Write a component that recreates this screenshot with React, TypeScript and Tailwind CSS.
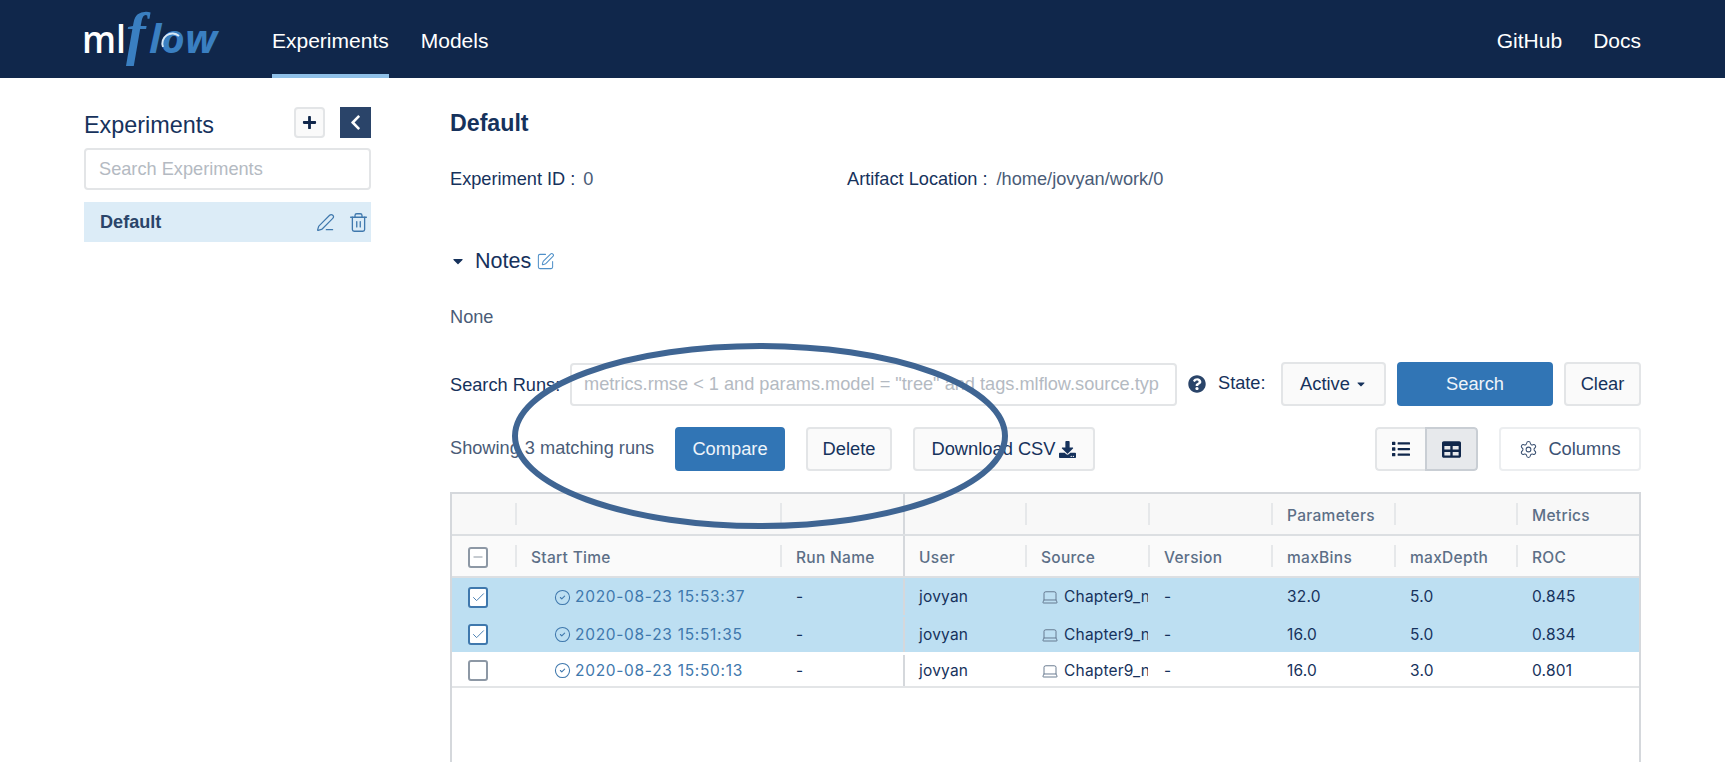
import React from "react";
import { CircleCheck, Laptop, PenLine, Settings, SquarePen, Trash2, Check, Minus } from "lucide-react";
import { FaChevronLeft, FaDownload, FaList, FaPlus, FaQuestionCircle, FaTable, FaCaretDown } from "react-icons/fa";

const COLS = "grid grid-cols-[63px_265px_123px_122px_123px_123px_123px_122px_123px]";

function Logo() {
  return (
    <svg width="150" height="62" viewBox="0 0 150 62" className="ml-[80px] mt-[10px] shrink-0">
      <text x="2" y="43" fontFamily="'Open Sans', sans-serif" fontSize="37" fontWeight="600" fill="#ffffff" textLength="44" lengthAdjust="spacingAndGlyphs">ml</text>
      <text x="46" y="43" fontFamily="'Liberation Serif', serif" fontStyle="italic" fontSize="59" fontWeight="700" fill="#3a7fc1">f</text>
      <text x="69" y="43" fontFamily="'Open Sans', sans-serif" fontStyle="italic" fontSize="40" fontWeight="700" fill="#3a7fc1" textLength="68" lengthAdjust="spacingAndGlyphs">low</text>
      <path d="M83 37 A10 10 0 0 1 99 26" fill="none" stroke="#d8e8f5" strokeWidth="2" />
    </svg>
  );
}

function Btn({ className = "", primary = false, children }: { className?: string; primary?: boolean; children: React.ReactNode }) {
  return (
    <div
      className={`flex h-[44px] items-center justify-center rounded-[4px] border-2 text-[18.3px] ${
        primary ? "border-[#3175b5] bg-[#3175b5] text-[#eef4fa]" : "border-[#e3e5e7] bg-[#fafafa] text-[#16325c]"
      } ${className}`}
    >
      {children}
    </div>
  );
}

function Box({ state }: { state: "checked" | "empty" | "some" }) {
  return (
    <div className={`flex h-full items-center pl-[16px] ${state === "some" ? "pt-[2px]" : ""}`}>
      <span
        className={`flex h-[21px] w-[20px] items-center justify-center rounded-[3px] border-2 bg-white ${
          state === "checked" ? "border-[#3f78ad]" : "border-[#8d98a5]"
        }`}
      >
        {state === "checked" && <Check size={15} strokeWidth={1.5} className="text-[#3f78ad]" />}
        {state === "some" && <Minus size={14} strokeWidth={1.5} className="text-[#7c8794]" />}
      </span>
    </div>
  );
}

const runs = [
  { t: "2020-08-23 15:53:37", bins: "32.0", depth: "5.0", roc: "0.845", sel: true, h: "h-[37px] pt-[1px]" },
  { t: "2020-08-23 15:51:35", bins: "16.0", depth: "5.0", roc: "0.834", sel: true, h: "h-[37px] pt-[2px]" },
  { t: "2020-08-23 15:50:13", bins: "16.0", depth: "3.0", roc: "0.801", sel: false, h: "h-[36px] pt-[3px]" },
];

function Separator() {
  return <span className="absolute left-0 top-1/2 h-[22px] w-[2px] -translate-y-1/2 bg-[#e6e8ea]" />;
}

function H({ children, first = false, divider = false }: { children?: React.ReactNode; first?: boolean; divider?: boolean }) {
  return (
    <div
      className={`relative flex h-full items-center pt-[3px] text-[15.5px] font-medium tracking-[0.3px] text-[#5c6f87] ${
        divider ? "border-l-2 border-l-[#d5d8dc] pl-[14px]" : "pl-[16px]"
      }`}
    >
      {!first && !divider && <Separator />}
      {children}
    </div>
  );
}

function C({ children, divider = false }: { children?: React.ReactNode; divider?: boolean }) {
  return (
    <div
      className={`flex h-full items-center overflow-hidden whitespace-nowrap text-[15.5px] tracking-[0.2px] text-[#16325c] ${
        divider ? "border-l-2 border-l-[#d5d8dc] pl-[14px]" : "pl-[16px]"
      }`}
    >
      {children}
    </div>
  );
}

export default function App() {
  return (
    <div className="relative h-[762px] w-[1725px] overflow-hidden bg-white font-['Liberation_Sans',sans-serif] text-[#16325c]">
      <header className="flex h-[78px] items-start justify-between bg-[#10274b] text-[21px] text-white">
        <div className="flex h-full items-start">
          <Logo />
          <div className="ml-[42px] flex h-full items-center gap-[32px]">
            <div className="relative flex h-full items-center pt-[4px]">
              Experiments
              <span className="absolute bottom-0 left-0 h-[4px] w-full bg-[#8fc0e8]" />
            </div>
            <div className="pt-[4px]">Models</div>
          </div>
        </div>
        <div className="mr-[84px] flex h-full items-center gap-[31px] pt-[4px]">
          <div>GitHub</div>
          <div>Docs</div>
        </div>
      </header>

      <div className="flex">
        <aside className="w-[450px] shrink-0 pl-[84px] pt-[29px]">
          <div className="w-[287px]">
            <div className="flex h-[31px] items-center">
              <div className="pt-[6px] text-[23.4px]">Experiments</div>
              <div className="ml-auto flex gap-[15px]">
                <div className="flex h-[31px] w-[31px] items-center justify-center rounded-[4px] border-2 border-[#e3e5e7] bg-[#fafafa]">
                  <FaPlus size={15} className="text-[#10274b]" />
                </div>
                <div className="flex h-[31px] w-[31px] items-center justify-center bg-[#2a4469]">
                  <FaChevronLeft size={17} className="text-white" />
                </div>
              </div>
            </div>
            <div className="mt-[10px] flex h-[42px] items-center rounded-[4px] border-2 border-[#e3e5e7] pl-[13px] pt-[2px] text-[18.2px] text-[#b4bac2]">
              Search Experiments
            </div>
            <div className="mt-[12px] flex h-[40px] items-center bg-[#dcecf7] pl-[16px] pr-[2px]">
              <span className="pt-[2px] text-[18.1px] font-bold text-[#2a4469]">Default</span>
              <PenLine size={19} strokeWidth={1.5} className="ml-auto text-[#3f78ad]" />
              <Trash2 size={21} strokeWidth={1.5} className="ml-[13px] text-[#3f78ad]" />
            </div>
          </div>
        </aside>

        <main className="w-[1191px] shrink-0">
          <div className="flex h-[88px] items-center pt-[2px] text-[23.2px] font-bold">Default</div>
          <div className="flex h-[26px] items-center pt-[2px] text-[18.2px]">
            <div className="flex w-[397px]">
              <span>Experiment ID :</span>
              <span className="ml-[8px] text-[#4a5c77]">0</span>
            </div>
            <span>Artifact Location :</span>
            <span className="ml-[9px] text-[#4a5c77]">/home/jovyan/work/0</span>
          </div>
          <div className="mt-[56px] flex h-[26px] items-center">
            <FaCaretDown size={16} className="text-[#16325c]" />
            <span className="ml-[9px] text-[21.5px]">Notes</span>
            <SquarePen size={19} strokeWidth={1.3} className="ml-[5px] text-[#4f90c8]" />
          </div>
          <div className="mt-[29px] flex h-[26px] items-center pt-[4px] text-[18.2px] text-[#4a5c77]">None</div>

          <div className="mt-[33px] flex h-[44px] items-center">
            <span className="w-[120px] pt-[4px] text-[18.2px]">Search Runs:</span>
            <div className="flex h-[43px] w-[607px] items-center overflow-hidden whitespace-nowrap rounded-[4px] border-2 border-[#e3e5e7] pl-[12px] pt-[2px] text-[18.2px] text-[#b4bac2]">
              metrics.rmse &lt; 1 and params.model = "tree" and tags.mlflow.source.typ
            </div>
            <FaQuestionCircle size={18} className="ml-[11px] text-[#2a4469]" />
            <span className="ml-[12px] w-[48px] text-[18.2px]">State:</span>
            <Btn className="ml-[15px] w-[105px] gap-[5px]">
              Active <FaCaretDown size={12} />
            </Btn>
            <Btn primary className="ml-[11px] w-[156px]">Search</Btn>
            <Btn className="ml-[11px] w-[77px]">Clear</Btn>
          </div>

          <div className="mt-[21px] flex h-[44px] items-center">
            <span className="w-[225px] text-[18.2px] text-[#4a5c77]">Showing 3 matching runs</span>
            <Btn primary className="w-[110px]">Compare</Btn>
            <Btn className="ml-[21px] w-[86px]">Delete</Btn>
            <Btn className="ml-[21px] w-[182px] gap-[4px]">
              Download CSV <FaDownload size={17} />
            </Btn>
            <div className="ml-[280px] flex h-[44px] w-[103px] overflow-hidden rounded-[4px]">
              <div className="flex w-[50px] items-center justify-center rounded-l-[4px] border-2 border-r-0 border-[#e3e5e7] bg-[#fafafa]">
                <FaList size={18} className="text-[#10274b]" />
              </div>
              <div className="flex w-[53px] items-center justify-center rounded-r-[4px] border-2 border-[#c9ced4] bg-[#e7e9ec]">
                <FaTable size={19} className="text-[#10274b]" />
              </div>
            </div>
            <div className="ml-[21px] flex h-[44px] w-[142px] items-center justify-center gap-[10px] rounded-[4px] border-2 border-[#eceef0] text-[18.3px] text-[#3c5273]">
              <Settings size={19} strokeWidth={1.3} />
              Columns
            </div>
          </div>

          <div className="mt-[21px] h-[300px] w-[1191px] border-x-2 border-t-2 border-[#d5d8dc] font-['Inter',sans-serif]">
            <div className={`${COLS} h-[42px] border-b-2 border-[#dcdfe2] bg-[#f8f8f8]`}>
              <H first />
              <H />
              <H />
              <H divider />
              <H />
              <H />
              <H>Parameters</H>
              <H />
              <H>Metrics</H>
            </div>
            <div className={`${COLS} h-[42px] border-b-2 border-[#dcdfe2] bg-[#fafafa]`}>
              <Box state="some" />
              <H>Start Time</H>
              <H>Run Name</H>
              <H divider>User</H>
              <H>Source</H>
              <H>Version</H>
              <H>maxBins</H>
              <H>maxDepth</H>
              <H>ROC</H>
            </div>
            {runs.map((r) => (
              <div key={r.t} className={`${COLS} ${r.h} ${r.sel ? "bg-[#bddff2]" : "border-b-2 border-[#e3e5e7] bg-white"}`}>
                <Box state={r.sel ? "checked" : "empty"} />
                <C>
                  <span className="ml-[23px] flex items-center gap-[4px] tracking-[0.7px] text-[#3f78ad]">
                    <CircleCheck size={17} strokeWidth={1.5} />
                    {r.t}
                  </span>
                </C>
                <C>-</C>
                <C divider>jovyan</C>
                <C>
                  <Laptop size={18} strokeWidth={1.2} className="mr-[5px] shrink-0 text-[#5c6f87]" />
                  Chapter9_n
                </C>
                <C>-</C>
                <C>{r.bins}</C>
                <C>{r.depth}</C>
                <C>{r.roc}</C>
              </div>
            ))}
          </div>
        </main>
      </div>

      <svg width="500" height="192" viewBox="0 0 500 192" className="pointer-events-none absolute left-[510px] top-[340px]">
        <ellipse cx="250" cy="96" rx="245" ry="90" fill="none" stroke="#3f6593" strokeWidth="6" />
      </svg>
    </div>
  );
}
